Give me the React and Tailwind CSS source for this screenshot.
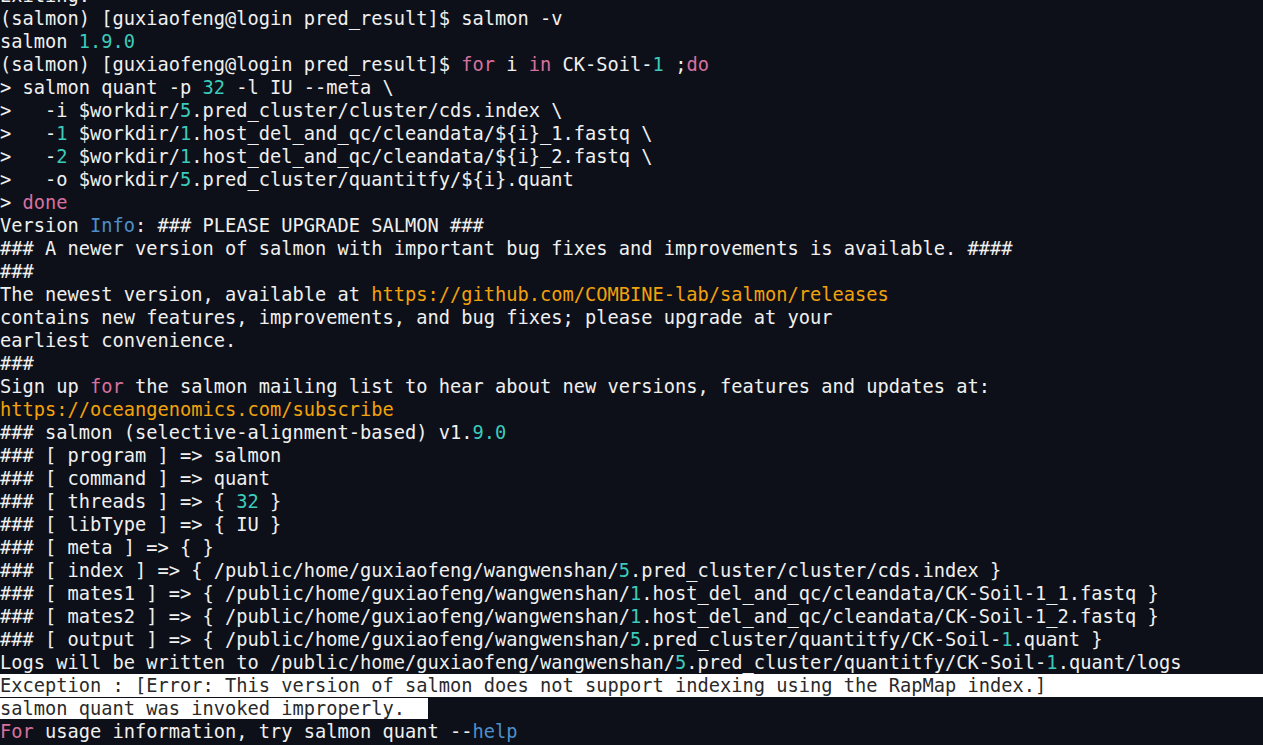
const T = ({ children }) => <span className="text-[#3ccbbb]">{children}</span>;
const P = ({ children }) => <span className="text-[#d8709f]">{children}</span>;
const B = ({ children }) => <span className="text-[#4d8fcb]">{children}</span>;
const O = ({ children }) => <span className="text-[#f2a20c]">{children}</span>;

const Line = ({ children, className = '' }) => (
  <div className={`h-[23px] leading-[23px] whitespace-pre ${className}`}>{children}</div>
);

const prompt = '(salmon) [guxiaofeng@login pred_result]$ ';
const home = '/public/home/guxiaofeng/wangwenshan/';

export default function App() {
  return (
    <div
      className="h-[745px] w-full overflow-hidden bg-[#0e1019] text-[#f0f0f0] text-[18.7px]"
      style={{ fontFamily: '"DejaVu Sans Mono", "Liberation Mono", monospace' }}
    >
      <div className="-mt-[16px]">
        <Line>Exiting.</Line>
        <Line>{prompt}salmon -v</Line>
        <Line>salmon <T>1.9.0</T></Line>
        <Line>
          {prompt}<P>for</P> i <P>in</P> CK-Soil-<T>1</T> ;<P>do</P>
        </Line>
        <Line>{'> salmon quant -p '}<T>32</T>{' -l IU --meta \\'}</Line>
        <Line>{'>   -i $workdir/'}<T>5</T>{'.pred_cluster/cluster/cds.index \\'}</Line>
        <Line>{'>   -'}<T>1</T>{' $workdir/'}<T>1</T>{'.host_del_and_qc/cleandata/${i}_1.fastq \\'}</Line>
        <Line>{'>   -'}<T>2</T>{' $workdir/'}<T>1</T>{'.host_del_and_qc/cleandata/${i}_2.fastq \\'}</Line>
        <Line>{'>   -o $workdir/'}<T>5</T>{'.pred_cluster/quantitfy/${i}.quant'}</Line>
        <Line>{'> '}<P>done</P></Line>
        <Line>Version <B>Info</B>: ### PLEASE UPGRADE SALMON ###</Line>
        <Line>### A newer version of salmon with important bug fixes and improvements is available. ####</Line>
        <Line>###</Line>
        <Line>The newest version, available at <O>https://github.com/COMBINE-lab/salmon/releases</O></Line>
        <Line>contains new features, improvements, and bug fixes; please upgrade at your</Line>
        <Line>earliest convenience.</Line>
        <Line>###</Line>
        <Line>Sign up <P>for</P> the salmon mailing list to hear about new versions, features and updates at:</Line>
        <Line><O>https://oceangenomics.com/subscribe</O></Line>
        <Line>### salmon (selective-alignment-based) v1.<T>9.0</T></Line>
        <Line>### [ program ] =&gt; salmon</Line>
        <Line>### [ command ] =&gt; quant</Line>
        <Line>### [ threads ] =&gt; {'{ '}<T>32</T>{' }'}</Line>
        <Line>### [ libType ] =&gt; {'{ IU }'}</Line>
        <Line>### [ meta ] =&gt; {'{ }'}</Line>
        <Line>{'### [ index ] => { ' + home}<T>5</T>{'.pred_cluster/cluster/cds.index }'}</Line>
        <Line>{'### [ mates1 ] => { ' + home}<T>1</T>{'.host_del_and_qc/cleandata/CK-Soil-1_1.fastq }'}</Line>
        <Line>{'### [ mates2 ] => { ' + home}<T>1</T>{'.host_del_and_qc/cleandata/CK-Soil-1_2.fastq }'}</Line>
        <Line>{'### [ output ] => { ' + home}<T>5</T>{'.pred_cluster/quantitfy/CK-Soil-'}<T>1</T>{'.quant }'}</Line>
        <Line>{'Logs will be written to ' + home}<T>5</T>{'.pred_cluster/quantitfy/CK-Soil-'}<T>1</T>{'.quant/logs'}</Line>
        <Line className="bg-white text-[#2a2a2a]">
          Exception : [Error: This version of salmon does not support indexing using the RapMap index.]
        </Line>
        <Line>
          <span className="bg-white text-[#2a2a2a]">{'salmon quant was invoked improperly.  '}</span>
        </Line>
        <Line><P>For</P> usage information, try salmon quant --<B>help</B></Line>
      </div>
    </div>
  );
}
